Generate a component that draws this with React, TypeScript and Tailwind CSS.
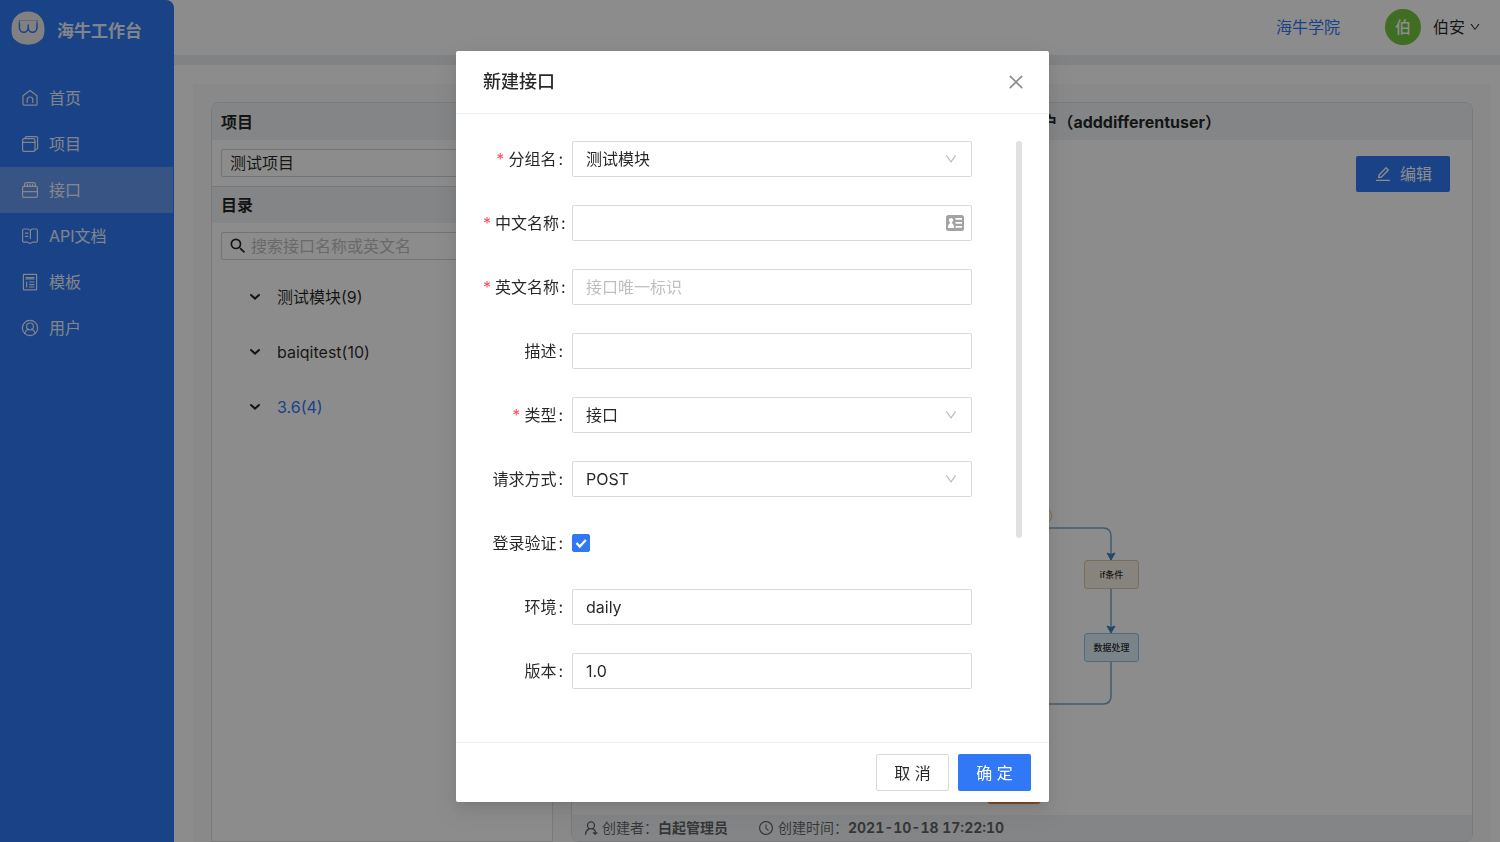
import { useState } from "react";
import type { ReactNode } from "react";
import {
  AiOutlineClockCircle,
  AiOutlineClose,
  AiOutlineDown,
  AiOutlineEdit,
} from "react-icons/ai";
import { MdSearch } from "react-icons/md";

const iconProps = {
  viewBox: "0 0 18 18",
  fill: "none",
  stroke: "currentColor",
  strokeWidth: 1.2,
  strokeLinecap: "round" as const,
  strokeLinejoin: "round" as const,
  className: "size-[18px] shrink-0",
};

const menu = [
  {
    title: "首页",
    icon: (
      <svg {...iconProps}>
        <path d="M2 6.8 9 1.6l7 5.2v8.4a1 1 0 0 1-1 1H3a1 1 0 0 1-1-1z" />
        <path d="M6.2 13.4v-2.6a2.8 2.8 0 0 1 5.6 0v2.6" />
      </svg>
    ),
  },
  {
    title: "项目",
    icon: (
      <svg {...iconProps}>
        <rect x="1.6" y="3.6" width="12.4" height="12.8" rx="1.4" />
        <path d="M1.6 7.4H14M3.8 3.4 5 1.6h10.2a1.4 1.4 0 0 1 1.4 1.4v10.4L14.2 15" />
      </svg>
    ),
  },
  {
    title: "接口",
    icon: (
      <svg {...iconProps}>
        <path d="M3.6 5.4V3.2a1.6 1.6 0 0 1 1.6-1.6h7.6a1.6 1.6 0 0 1 1.6 1.6v2.2" />
        <rect x="1.6" y="5.4" width="14.8" height="11" rx="1.4" />
        <path d="M1.6 10.6h14.8M6.4 3.4v1.8M9 3.4v1.8M11.6 3.4v1.8" />
      </svg>
    ),
  },
  {
    title: "API文档",
    icon: (
      <svg {...iconProps}>
        <path d="M9.4 11.6V4.2C9.4 2.8 10.200 2 11.6 2H15a1.4 1.4 0 0 1 1.4 1.4v10.4a1.4 1.4 0 0 1-1.4 1.4h-3.6L9 16.6l-2.4-1.4H3a1.4 1.4 0 0 1-1.4-1.4V3.4A1.4 1.4 0 0 1 3 2h3.2c1 0 1.6.3 2 .9" />
        <path d="M4.4 6.2h2.4M4.4 9.4h2.4" />
      </svg>
    ),
  },
  {
    title: "模板",
    icon: (
      <svg {...iconProps}>
        <rect x="2.4" y="1.4" width="13.2" height="15.4" rx=".6" />
        <path d="M5 4.6h8M5 6h8M5.6 9v5M8.6 9H13M8.6 11.6H13M8.6 14H13" />
      </svg>
    ),
  },
  {
    title: "用户",
    icon: (
      <svg {...iconProps}>
        <circle cx="9" cy="9" r="7.6" />
        <circle cx="9" cy="7.4" r="3.4" />
        <path d="M3.8 14.4c.6-2.4 2-3.8 3.600-4.400M14.200 14.400c-.6-2.400-2-3.800-3.600-4.400" />
      </svg>
    ),
  },
];

const groups = [
  { name: "测试模块(9)", color: "text-black/85" },
  { name: "baiqitest(10)", color: "text-black/85" },
  { name: "3.6(4)", color: "text-[#3078f5]" },
];

const fieldClass =
  "h-9 w-full rounded-xs border border-[#d9d9d9] bg-white px-[13px] text-base text-black/85 outline-none placeholder:text-[#bfbfbf]";

function Sidebar() {
  return (
    <aside className="w-[174px] shrink-0 rounded-tr-lg bg-[#3078f5] text-white/90">
      <div className="flex h-[75px] items-start gap-3 pt-[11px] pl-[11px]">
        <svg viewBox="0 0 34 34" className="size-[34px] shrink-0">
          <path
            d="M17 .4C26.5.4 33 7 33.4 16c.3 6-.4 10-3 12.6C27 32 22 33.800 17 33.800S7 32 3.600 28.600C1 26 .3 22 .6 16 1 7 7.500.4 17 .4z"
            fill="#ececec"
          />
          <path
            d="M8.400 12v4.800a4.400 4.400 0 0 0 8.800 0V13.600v3.200a4.400 4.400 0 0 0 8.800 0V12"
            fill="none"
            stroke="#3078f5"
            strokeWidth="1.500"
            strokeLinecap="round"
          />
          <path d="M9.500 9.600h15" stroke="#3078f5" strokeWidth=".6" opacity=".6" />
          <circle cx="8.400" cy="10" r=".8" fill="#3078f5" />
          <circle cx="26" cy="10" r=".8" fill="#3078f5" />
        </svg>
        <span className="pt-1 text-[17px] leading-8 font-bold whitespace-nowrap">海牛工作台</span>
      </div>
      <nav>
        {menu.map((item) => (
          <a
            key={item.title}
            href="#"
            className={`flex h-[46px] items-center gap-2.5 pl-[21px] text-base ${
              item.title === "接口" ? "mr-px bg-[#669af2]" : ""
            }`}
          >
            {item.icon}
            {item.title}
          </a>
        ))}
      </nav>
    </aside>
  );
}

function TopBar() {
  return (
    <header className="flex h-[65px] shrink-0 items-center justify-end border-b-[10px] border-[#e9edf1] bg-white pr-[19px] pb-0.5">
      <a href="#" className="mr-[45px] text-base text-[#3078f5]">
        海牛学院
      </a>
      <span className="mr-3 flex size-9 items-center justify-center rounded-full bg-[#73c63c] text-base font-medium text-white">
        伯
      </span>
      <button className="flex items-center gap-1 text-base text-black/85">
        伯安
        <AiOutlineDown className="size-3" />
      </button>
    </header>
  );
}

function Catalog() {
  return (
    <section className="w-[342px] shrink-0 overflow-hidden rounded-t-lg border border-[#dcdfe2] bg-white">
      <h2 className="flex h-[37px] items-center bg-[#eff2f5] px-[9px] text-base font-bold">项目</h2>
      <div className="px-[9px] py-[9px]">
        <select
          aria-label="项目"
          className="block h-7 w-full appearance-none rounded-xs border border-[#d0d3d6] bg-white px-2 text-base text-black/85"
        >
          <option>测试项目</option>
        </select>
      </div>
      <h2 className="flex h-[37px] items-center border-t border-[#d5d9dd] bg-[#eff2f5] px-[9px] text-base font-bold">
        目录
      </h2>
      <div className="px-[9px] py-[9px]">
        <label className="flex h-7 items-center gap-[3px] rounded-xs border border-[#d0d3d6] pl-1.5">
          <MdSearch className="size-5" />
          <input
            aria-label="搜索接口"
            placeholder="搜索接口名称或英文名"
            className="min-w-0 flex-1 text-base outline-none placeholder:text-[#bfbfbf]"
          />
        </label>
      </div>
      <ul>
        {groups.map((group) => (
          <li key={group.name} className="flex h-[55px] items-center gap-4 pl-[37px] text-base">
            <svg
              viewBox="0 0 12 8"
              className="h-2 w-3"
              fill="none"
              stroke="currentColor"
              strokeWidth="2"
              strokeLinecap="round"
            >
              <path d="m2 2 4 3.600L10 2" />
            </svg>
            <span className={group.color}>{group.name}</span>
          </li>
        ))}
      </ul>
    </section>
  );
}

function FlowDiagram() {
  return (
    <div className="absolute right-[333px] bottom-[11px] h-[304px] w-[152px]">
      <svg viewBox="0 0 152 304" className="size-full" fill="none">
        <path d="M40 3h14q4 0 6 4l4 6q2 3 0 6l-4 6q-2 4-6 4H40z" fill="#fbf3dd" stroke="#d8c89c" />
        <path
          d="M40 28h76q8 0 8 8v24M124 88v44M124 162v34q0 8-8 8H40"
          stroke="#7ba8c8"
          strokeWidth="1.500"
        />
        <path d="m120 53 4 7 4-7-4 1.500zM120 126l4 7 4-7-4 1.500z" fill="#3f86b8" stroke="#3f86b8" />
      </svg>
      <div className="absolute top-[60px] right-0 flex h-[29px] w-[55px] items-center justify-center rounded-[3px] border border-[#d9c9a6] bg-[#f6f0e4] text-[9px] font-medium">
        if条件
      </div>
      <div className="absolute top-[133px] right-0 flex h-[29px] w-[55px] items-center justify-center rounded-[3px] border border-[#93c4e0] bg-[#dff0f8] text-[9px] font-medium">
        数据处理
      </div>
      <div className="absolute bottom-0 left-0 h-6 w-[54px] rounded-sm bg-[#ee8b4c]" />
    </div>
  );
}

function Detail() {
  return (
    <section className="flex min-w-0 flex-1 flex-col overflow-hidden rounded-lg border border-[#dcdfe2] bg-white">
      <h2 className="flex h-[37px] shrink-0 items-center justify-end bg-[#eff2f5] pr-[251px] text-base font-bold">
        用户（adddifferentuser）
      </h2>
      <div className="relative flex flex-1 items-start justify-end pt-4 pr-[22px]">
        <button className="flex h-9 items-center gap-2 rounded-xs bg-[#3078f5] px-[18px] text-base text-white">
          <AiOutlineEdit className="size-[18px]" />
          编辑
        </button>
        <FlowDiagram />
      </div>
      <footer className="flex h-[26px] shrink-0 items-center bg-[#eff2f5] pl-3 text-sm text-black/60">
        <svg
          viewBox="0 0 14 14"
          className="mr-1 size-3.5"
          fill="none"
          stroke="currentColor"
          strokeWidth="1.300"
          strokeLinecap="round"
        >
          <circle cx="7" cy="4.400" r="3.500" />
          <path d="M1.500 13.200c.3-2.800 1.800-4.600 3.500-5.400M9 7.800c.8.4 1.400 1 1.900 1.700M9.400 12h3.600M11.200 10.200v3.600" />
        </svg>
        创建者：
        <strong>白起管理员</strong>
        <AiOutlineClockCircle className="mr-1 ml-[30px] size-4" />
        创建时间：
        <strong className="tabular-nums">2021-10-18 17:22:10</strong>
      </footer>
    </section>
  );
}

type FieldProps = {
  id: string;
  label: string;
  required?: boolean;
  children: ReactNode;
};

function Field({ id, label, required, children }: FieldProps) {
  return (
    <div className="mb-7 flex h-9 items-center">
      <label
        htmlFor={id}
        className="w-[89px] shrink-0 text-right text-base whitespace-nowrap text-black/85"
      >
        {required && <span className="mr-1 text-[#ff4d4f]">*</span>}
        {label}
        <span className="mr-[9px] ml-0.5">:</span>
      </label>
      <div className="relative flex w-[400px] items-center">{children}</div>
    </div>
  );
}

function SelectBox({ id, value }: { id: string; value: string }) {
  return (
    <>
      <select id={id} className={`${fieldClass} appearance-none`}>
        <option>{value}</option>
      </select>
      <AiOutlineDown className="pointer-events-none absolute right-3.5 size-3.5 text-black/30" />
    </>
  );
}

function CreateModal({ onClose }: { onClose: () => void }) {
  return (
    <div className="fixed inset-0 flex items-start justify-center overflow-hidden bg-black/45 pt-[51px] pl-[5px]">
      <div
        role="dialog"
        aria-label="新建接口"
        className="w-[593px] rounded-xs bg-white shadow-[0_3px_6px_-4px_rgba(0,0,0,0.12),0_6px_16px_rgba(0,0,0,0.08),0_9px_28px_8px_rgba(0,0,0,0.05)]"
      >
        <div className="flex h-[63px] items-center justify-between border-b border-[#f0f0f0] px-[27px]">
          <h1 className="text-lg font-medium text-black/85">新建接口</h1>
          <button aria-label="关闭" onClick={onClose} className="-mr-1 text-black/45">
            <AiOutlineClose className="size-5" />
          </button>
        </div>

        <div className="flex items-start justify-between px-[27px] pt-[27px] pb-[25px]">
          <form>
            <Field id="group" label="分组名" required>
              <SelectBox id="group" value="测试模块" />
            </Field>
            <Field id="cnName" label="中文名称" required>
              <input id="cnName" className={fieldClass} />
              <svg viewBox="0 0 18 16" className="absolute right-2 h-4 w-[18px]">
                <rect width="18" height="16" rx="2.500" fill="#a3a3a3" />
                <path
                  d="M5 3a2.200 2.200 0 0 0-1.200 4v1.400C2.600 9 2 10 2 13h6c0-3-.6-4-1.800-4.600V7A2.200 2.200 0 0 0 5 3zM9.500 3h6.500v1.800H9.500zM9.500 7h6.500v1.800H9.500zM9.500 11h6.500v1.800H9.500z"
                  fill="#fff"
                />
              </svg>
            </Field>
            <Field id="enName" label="英文名称" required>
              <input id="enName" placeholder="接口唯一标识" className={fieldClass} />
            </Field>
            <Field id="desc" label="描述">
              <input id="desc" className={fieldClass} />
            </Field>
            <Field id="type" label="类型" required>
              <SelectBox id="type" value="接口" />
            </Field>
            <Field id="method" label="请求方式">
              <SelectBox id="method" value="POST" />
            </Field>
            <Field id="auth" label="登录验证">
              <input
                id="auth"
                type="checkbox"
                defaultChecked
                className="peer size-[18px] appearance-none rounded-xs border border-[#d9d9d9] checked:border-[#3078f5] checked:bg-[#3078f5]"
              />
              <svg
                viewBox="0 0 18 18"
                className="pointer-events-none absolute left-0 hidden size-[18px] peer-checked:block"
                fill="none"
                stroke="#fff"
                strokeWidth="2.200"
              >
                <path d="m4.500 9 3.300 3.600 6-6.600" />
              </svg>
            </Field>
            <Field id="env" label="环境">
              <input id="env" defaultValue="daily" className={fieldClass} />
            </Field>
            <Field id="version" label="版本">
              <input id="version" defaultValue="1.0" className={fieldClass} />
            </Field>
          </form>
          <div className="h-[397px] w-1.5 rounded-full bg-[#e1e1e1]" />
        </div>

        <div className="flex h-[60px] items-center justify-end gap-[9px] border-t border-[#f0f0f0] px-[18px]">
          <button
            onClick={onClose}
            className="h-[37px] w-[73px] rounded-xs border border-[#d9d9d9] bg-white text-base text-black/85"
          >
            取 消
          </button>
          <button className="h-[37px] w-[73px] rounded-xs bg-[#3078f5] text-base text-white">
            确 定
          </button>
        </div>
      </div>
    </div>
  );
}

export default function App() {
  const [open, setOpen] = useState(true);

  return (
    <div className="flex h-screen overflow-hidden bg-white font-['Inter','Noto_Sans_CJK_SC',sans-serif] text-black/85">
      <Sidebar />
      <div className="flex min-w-0 flex-1 flex-col">
        <TopBar />
        <main className="mt-[19px] mr-[9px] ml-[19px] flex flex-1 gap-[18px] bg-[#fafafa] px-[18px] pt-[18px]">
          <Catalog />
          <Detail />
        </main>
      </div>
      {open && <CreateModal onClose={() => setOpen(false)} />}
    </div>
  );
}
